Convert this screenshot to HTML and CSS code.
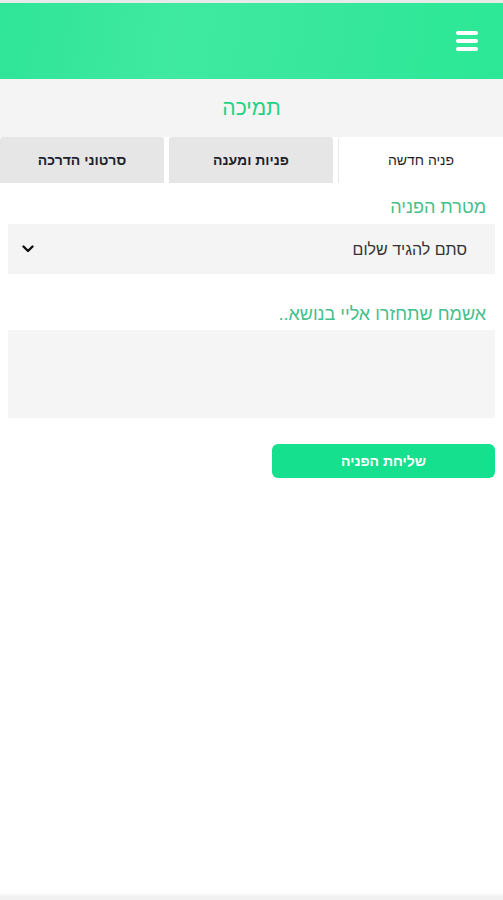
FILE: index.html
```html
<!DOCTYPE html>
<html lang="he" dir="rtl">
<head>
  <meta charset="UTF-8">
  <meta name="viewport" content="width=device-width, initial-scale=1.0">
  <title>תמיכה</title>
  <link rel="stylesheet" href="styles.css">
</head>
<body>

<div class="page">
  <div class="top-line"></div>

  <!-- Header -->
  <header class="app-header">
    <button class="menu-btn" aria-label="תפריט">
      <span></span><span></span><span></span>
    </button>
  </header>

  <div class="title-bar">
    <h1>תמיכה</h1>
  </div>

  <!-- Tabs -->
  <nav class="tabs">
    <a class="tab active" href="#">פניה חדשה</a>
    <a class="tab" href="#">פניות ומענה</a>
    <a class="tab" href="#">סרטוני הדרכה</a>
  </nav>

  <!-- Support form -->
  <form class="support-form">
    <label class="field-label" for="purpose">מטרת הפניה</label>
    <div class="select-wrap">
      <select id="purpose" class="field-select">
        <option>סתם להגיד שלום</option>
      </select>
      <svg class="chevron" width="12" height="8" viewBox="0 0 12 8">
        <path d="M1.5 1.5 L6 6 L10.5 1.5" fill="none" stroke="#111" stroke-width="2.4" stroke-linecap="round" stroke-linejoin="round"/>
      </svg>
    </div>

    <label class="field-label second" for="message">אשמח שתחזרו אליי בנושא..</label>
    <textarea id="message" class="field-text"></textarea>

    <button type="submit" class="send-btn">שליחת הפניה</button>
  </form>

  <div class="spacer"></div>
  <div class="bottom-bar"></div>
</div>

</body>
</html>
```

FILE: styles.css
```css
body {
  margin: 0;
  font-family: 'Liberation Sans', Arial, sans-serif;
  background-color: #ffffff;
  color: #222222;
}

.page {
  display: flex;
  flex-direction: column;
  min-height: 100vh;
}

.top-line {
  height: 3px;
  background-color: #e6ebe8;
}

.app-header {
  height: 76px;
  background: linear-gradient(100deg, #2fe597 0%, #3fe9a0 35%, #37e79c 65%, #2be896 100%);
  display: flex;
  align-items: center;
  padding: 0 25px;
}

.menu-btn {
  background: none;
  border: none;
  padding: 0;
  width: 22px;
  display: flex;
  flex-direction: column;
  gap: 4.5px;
  cursor: pointer;
}

.menu-btn span {
  display: block;
  height: 3.5px;
  border-radius: 2px;
  background-color: #ffffff;
}

.title-bar {
  height: 58px;
  background-color: #f4f4f4;
  display: flex;
  align-items: center;
  justify-content: center;
}

.title-bar h1 {
  margin: 0;
  font-size: 21px;
  font-weight: normal;
  color: #22d282;
}

.tabs {
  display: flex;
  gap: 5px;
  height: 46px;
}

.tab {
  flex: 1;
  display: flex;
  align-items: center;
  justify-content: center;
  background-color: #e6e6e6;
  border-radius: 3px 3px 0 0;
  color: #1f1f2e;
  font-size: 14px;
  font-weight: bold;
  text-decoration: none;
}

.tab.active {
  background-color: #ffffff;
  border-left: 1px solid #e8e8e8;
  font-weight: normal;
}

.support-form {
  display: flex;
  flex-direction: column;
  align-items: stretch;
  padding: 12px 8px 0;
}

.field-label {
  font-size: 18px;
  line-height: 24px;
  color: #45c08c;
  padding-right: 9px;
  margin-bottom: 5px;
}

.field-label.second {
  margin-top: 28px;
  margin-bottom: 4px;
}

.select-wrap {
  position: relative;
}

.field-select {
  width: 100%;
  height: 50px;
  appearance: none;
  -webkit-appearance: none;
  border: none;
  border-radius: 0;
  background-color: #f4f4f4;
  padding: 0 28px 0 40px;
  font-family: 'Liberation Sans', Arial, sans-serif;
  font-size: 16px;
  color: #333333;
}

.chevron {
  position: absolute;
  left: 14px;
  top: 21px;
  pointer-events: none;
}

.field-text {
  height: 88px;
  border: none;
  background-color: #f5f5f5;
  resize: none;
  box-sizing: border-box;
  font-family: 'Liberation Sans', Arial, sans-serif;
}

.send-btn {
  align-self: flex-start;
  margin-top: 26px;
  width: 223px;
  height: 34px;
  border: none;
  border-radius: 6px;
  background-color: #14e08e;
  color: #ffffff;
  font-family: 'Liberation Sans', Arial, sans-serif;
  font-size: 14px;
  font-weight: bold;
  cursor: pointer;
}

.spacer {
  flex: 1;
}

.bottom-bar {
  height: 7px;
  background: linear-gradient(#fcfcfc, #f0f0f0 60%);
}
```
